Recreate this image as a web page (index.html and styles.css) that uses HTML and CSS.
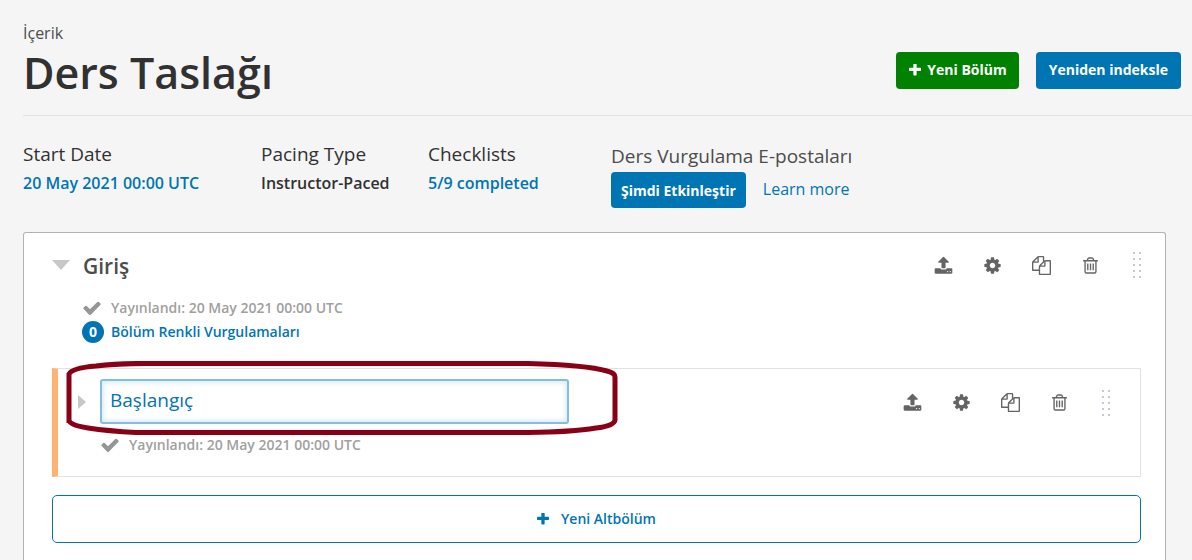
FILE: index.html
```html
<!DOCTYPE html>
<html lang="tr">
<head>
<meta charset="utf-8">
<title>Ders Taslağı</title>
<link rel="stylesheet" href="styles.css">
</head>
<body>
<svg class="sprite" aria-hidden="true">
  <symbol id="upload" viewBox="-64 0 1792 1792"><path d="M1280 1472q0-26-19-45t-45-19-45 19-19 45 19 45 45 19 45-19 19-45zm256 0q0-26-19-45t-45-19-45 19-19 45 19 45 45 19 45-19 19-45zm128-224v320q0 40-28 68t-68 28h-1472q-40 0-68-28t-28-68v-320q0-40 28-68t68-28h427q21 56 70.500 92t110.500 36h256q61 0 110.500-36t70.500-92h427q40 0 68 28t28 68zm-325-648q-17 40-59 40h-256v448q0 26-19 45t-45 19h-256q-26 0-45-19t-19-45v-448h-256q-42 0-59-40-17-39 14-69l448-448q18-19 45-19t45 19l448 448q31 30 14 69z"/></symbol>
  <symbol id="cog" viewBox="0 0 1792 1792"><path d="M1152 896q0-106-75-181t-181-75-181 75-75 181 75 181 181 75 181-75 75-181zm512-109v222q0 12-8 23t-20 13l-185 28q-19 54-39 91 35 50 107 138 10 12 10 25t-9 23q-27 37-99 108t-94 71q-12 0-26-9l-138-108q-44 23-91 38-16 136-29 186-7 28-36 28h-222q-14 0-24.500-8.500t-11.500-21.500l-28-184q-49-16-90-37l-141 107q-10 9-25 9-14 0-25-11-126-114-165-168-7-10-7-23 0-12 8-23 15-21 51-66.500t54-70.500q-27-50-41-99l-183-27q-13-2-21-12.500t-8-23.500v-222q0-12 8-23t19-13l186-28q14-46 39-92-40-57-107-138-10-12-10-24 0-10 9-23 26-36 98.500-107.500t94.500-71.500q13 0 26 10l138 107q44-23 91-38 16-136 29-186 7-28 36-28h222q14 0 24.500 8.500t11.500 21.500l28 184q49 16 90 37l142-107q9-9 24-9 13 0 25 10 129 119 165 170 7 8 7 22 0 12-8 23-15 21-51 66.500t-54 70.500q26 50 41 98l183 28q13 2 21 12.500t8 23.500z"/></symbol>
  <symbol id="copy" viewBox="0 0 1792 1792"><path d="M1696 384q40 0 68 28t28 68v1216q0 40-28 68t-68 28h-960q-40 0-68-28t-28-68v-288h-544q-40 0-68-28t-28-68v-672q0-40 20-88t48-76l408-408q28-28 76-48t88-20h416q40 0 68 28t28 68v328q68-40 128-40h416zm-544 213l-299 299h299v-299zm-640-384l-299 299h299v-299zm196 647l316-316v-416h-384v416q0 40-28 68t-68 28h-416v640h512v-256q0-40 20-88t48-76zm956 804v-1152h-384v416q0 40-28 68t-68 28h-416v640h896z"/></symbol>
  <symbol id="trash" viewBox="0 0 1792 1792"><path d="M704 736v576q0 14-9 23t-23 9h-64q-14 0-23-9t-9-23v-576q0-14 9-23t23-9h64q14 0 23 9t9 23zm256 0v576q0 14-9 23t-23 9h-64q-14 0-23-9t-9-23v-576q0-14 9-23t23-9h64q14 0 23 9t9 23zm256 0v576q0 14-9 23t-23 9h-64q-14 0-23-9t-9-23v-576q0-14 9-23t23-9h64q14 0 23 9t9 23zm128 724v-948h-896v948q0 22 7 40.500t14.500 27 10.500 8.500h832q3 0 10.500-8.500t14.500-27 7-40.500zm-672-1076h448l-48-117q-7-9-17-11h-317q-10 2-17 11zm928 32v64q0 14-9 23t-23 9h-96v948q0 83-47 143.500t-113 60.500h-832q-66 0-113-58.500t-47-141.500v-952h-96q-14 0-23-9t-9-23v-64q0-14 9-23t23-9h309l70-167q15-37 54-63t79-26h320q40 0 79 26t54 63l70 167h309q14 0 23 9t9 23z"/></symbol>
  <symbol id="check" viewBox="0 0 1792 1792"><path d="M1671 566q0 40-28 68l-724 724-136 136q-28 28-68 28t-68-28l-136-136-362-362q-28-28-28-68t28-68l136-136q28-28 68-28t68 28l294 295 656-657q28-28 68-28t68 28l136 136q28 28 28 68z"/></symbol>
  <symbol id="plus" viewBox="192 192 1408 1408"><path d="M1600 736v192q0 40-28 68t-68 28h-416v416q0 40-28 68t-68 28h-192q-40 0-68-28t-28-68v-416h-416q-40 0-68-28t-28-68v-192q0-40 28-68t68-28h416v-416q0-40 28-68t68-28h192q40 0 68 28t28 68v416h416q40 0 68 28t28 68z"/></symbol>
  <symbol id="drag" viewBox="0 0 8 26"><path d="M0 0h2v2H0zM6 0h2v2H6zM0 6h2v2H0zM6 6h2v2H6zM0 12h2v2H0zM6 12h2v2H6zM0 18h2v2H0zM6 18h2v2H6zM0 24h2v2H0zM6 24h2v2H6z"/></symbol>
</svg>
<div class="page">
  <header class="page-header">
    <div>
      <p class="subtitle">İçerik</p>
      <h1 class="title">Ders Taslağı</h1>
    </div>
    <div class="header-actions">
      <button class="btn btn-new" type="button"><svg class="plus"><use href="#plus"/></svg>Yeni Bölüm</button>
      <button class="btn" type="button">Yeniden indeksle</button>
    </div>
  </header>

  <section class="status">
    <div class="status-item status-date">
      <h2 class="status-label">Start Date</h2>
      <a class="status-value" href="#date">20 May 2021 00:00 UTC</a>
    </div>
    <div class="status-item status-pacing">
      <h2 class="status-label">Pacing Type</h2>
      <span class="status-value">Instructor-Paced</span>
    </div>
    <div class="status-item status-checks">
      <h2 class="status-label">Checklists</h2>
      <a class="status-value" href="#checklists">5/9 completed</a>
    </div>
    <div class="status-emails">
      <h2 class="status-label muted">Ders Vurgulama E-postaları</h2>
      <div class="email-row">
        <button class="btn btn-small" type="button">Şimdi Etkinleştir</button>
        <a class="learn" href="#learn">Learn more</a>
      </div>
    </div>
  </section>

  <main class="outline">
    <div class="row-head">
      <button class="toggle toggle-open" type="button" aria-label="Giriş"></button>
      <h3 class="section-title">Giriş</h3>
      <div class="actions">
        <button class="icon-btn" type="button" aria-label="Yayınla"><svg class="icon"><use href="#upload"/></svg></button>
        <button class="icon-btn" type="button" aria-label="Ayarlar"><svg class="icon"><use href="#cog"/></svg></button>
        <button class="icon-btn" type="button" aria-label="Kopyala"><svg class="icon"><use href="#copy"/></svg></button>
        <button class="icon-btn" type="button" aria-label="Sil"><svg class="icon"><use href="#trash"/></svg></button>
        <span class="handle"><svg class="drag"><use href="#drag"/></svg></span>
      </div>
    </div>
    <div class="section-meta">
      <p class="published"><svg class="check"><use href="#check"/></svg>Yayınlandı: 20 May 2021 00:00 UTC</p>
      <a class="highlights" href="#highlights"><span class="count">0</span>Bölüm Renkli Vurgulamaları</a>
    </div>

    <section class="subsection">
      <svg class="marker" viewBox="0 0 552 74" aria-hidden="true"><path d="M3 62V13Q6 7 30 5Q54 2 90 2.500H462Q520 4 541 10Q549 12 549 16V59Q548 65 530 67Q506 71 462 71.500H70Q42 70 22 67Q3 64 3 59"/></svg>
      <div class="row-head">
        <button class="toggle toggle-closed" type="button" aria-label="Başlangıç"></button>
        <input class="name-input" type="text" value="Başlangıç" aria-label="Altbölüm adı">
        <div class="actions sub-actions">
          <button class="icon-btn" type="button" aria-label="Yayınla"><svg class="icon"><use href="#upload"/></svg></button>
          <button class="icon-btn" type="button" aria-label="Ayarlar"><svg class="icon"><use href="#cog"/></svg></button>
          <button class="icon-btn" type="button" aria-label="Kopyala"><svg class="icon"><use href="#copy"/></svg></button>
          <button class="icon-btn" type="button" aria-label="Sil"><svg class="icon"><use href="#trash"/></svg></button>
          <span class="handle"><svg class="drag"><use href="#drag"/></svg></span>
        </div>
      </div>
      <p class="published sub-published"><svg class="check"><use href="#check"/></svg>Yayınlandı: 20 May 2021 00:00 UTC</p>
    </section>

    <button class="add" type="button"><svg class="plus"><use href="#plus"/></svg>Yeni Altbölüm</button>
  </main>
</div>
</body>
</html>
```
FILE: styles.css
```css
* { box-sizing: border-box; }
body {
  margin: 0;
  background: #f5f5f5;
  color: #313131;
  font-family: "Open Sans", "Noto Sans", sans-serif;
  font-size: 14px;
}
h1, h2, h3, p { margin: 0; }
a { color: #0075b4; text-decoration: none; }
button { font-family: inherit; cursor: pointer; }
.sprite { display: none; }
svg { fill: currentColor; flex: none; }

.page {
  display: flex;
  flex-direction: column;
  min-height: 100vh;
  padding-left: 23px;
}

.page-header {
  display: flex;
  justify-content: space-between;
  align-items: flex-end;
  padding: 22px 11px 13px 0;
  border-bottom: 1px solid #e2e2e2;
}
.subtitle { font-size: 16px; line-height: 22px; color: #4c4c4c; }
.title { font-size: 43px; line-height: 58px; font-weight: 600; }
.header-actions { display: flex; gap: 17px; padding-bottom: 13px; }
.btn {
  display: flex;
  align-items: center;
  height: 37px;
  padding: 0 13px 2px;
  border: 0;
  border-radius: 4px;
  background: #0075b4;
  color: #fff;
  font-size: 14px;
  font-weight: 700;
}
.btn-new { background: #008100; gap: 6px; padding-right: 12px; }
.btn-small { height: 36px; padding: 0 10px; }
.plus { width: 12px; height: 12px; }

.status { display: flex; padding: 26px 26px 24px 0; }
.status-item { display: flex; flex-direction: column; gap: 4px; }
.status-date { width: 238px; }
.status-pacing { width: 167px; }
.status-checks { width: 183px; }
.status-label { font-size: 19px; line-height: 25px; font-weight: 400; }
.status-value { font-size: 16px; line-height: 25px; font-weight: 600; }
.muted { color: #4c4c4c; }
.status-emails { padding-top: 2px; }
.email-row { display: flex; align-items: center; gap: 17px; padding-top: 3px; }
.learn { padding-bottom: 2px; font-size: 16px; }

.outline {
  flex: 1;
  margin-right: 26px;
  padding: 13px 24px 16px 28px;
  border: 1px solid #b2b2b2;
  border-bottom: 0;
  border-radius: 3px 3px 0 0;
  background: #fff;
}
.row-head { display: flex; align-items: center; }
.toggle { padding: 0; border: 0 solid transparent; background: none; }
.toggle-open {
  width: 18px;
  border-width: 10px 9px 0;
  border-top-color: #c8c8c8;
}
.section-title {
  margin-left: 13px;
  padding-top: 2px;
  font-size: 21px;
  line-height: 36px;
  font-weight: 600;
  color: #4c4c4c;
}
.actions { display: flex; align-items: center; gap: 30px; margin-left: auto; color: #646464; }
.sub-actions { padding: 2px 30px 0 0; }
.icon-btn { display: flex; padding: 0; border: 0; background: none; color: inherit; }
.icon { width: 19px; height: 19px; }
.handle { display: flex; padding-left: 3px; color: #c8c8d4; }
.drag { width: 8px; height: 26px; }

.section-meta { padding: 14px 0 0 30px; }
.published {
  display: flex;
  align-items: center;
  gap: 9px;
  font-weight: 600;
  line-height: 20px;
  color: #a0a0a0;
}
.check { width: 20px; height: 20px; color: #969696; }
.highlights {
  display: flex;
  width: fit-content;
  align-items: center;
  gap: 7px;
  margin-top: 3px;
  font-weight: 600;
  line-height: 22px;
}
.count {
  width: 22px;
  border-radius: 11px;
  background: #0075b4;
  color: #fff;
  font-weight: 700;
  text-align: center;
}

.subsection {
  position: relative;
  margin-top: 25px;
  padding: 10px 0 21px 20px;
  border: 1px solid #e2e2e2;
  border-left: 6px solid #ffb272;
}
.toggle-closed {
  height: 14px;
  border-width: 7px 0 7px 8px;
  border-left-color: #c8c8c8;
}
.name-input {
  width: 469px;
  height: 45px;
  margin-left: 14px;
  padding: 0 8px 4px;
  border: 2px solid #85bddb;
  border-radius: 3px;
  outline: 0;
  background: #fff;
  box-shadow: inset 0 0 4px 2px #d9edf7;
  color: #0075b4;
  font: 19px "Open Sans", "Noto Sans", sans-serif;
}
.sub-published { padding: 11px 0 0 22px; }
/* Hand-drawn ring around the name field */
.marker {
  position: absolute;
  top: -8px;
  left: 8px;
  width: 552px;
  height: 74px;
  fill: none;
  stroke: #880015;
  stroke-width: 5px;
  pointer-events: none;
}

.add {
  display: flex;
  justify-content: center;
  align-items: center;
  gap: 12px;
  width: 100%;
  height: 48px;
  margin-top: 18px;
  padding-bottom: 2px;
  border: 1px solid #0075b4;
  border-radius: 5px;
  background: #fff;
  color: #0075b4;
  font-size: 14px;
  font-weight: 600;
}
```
